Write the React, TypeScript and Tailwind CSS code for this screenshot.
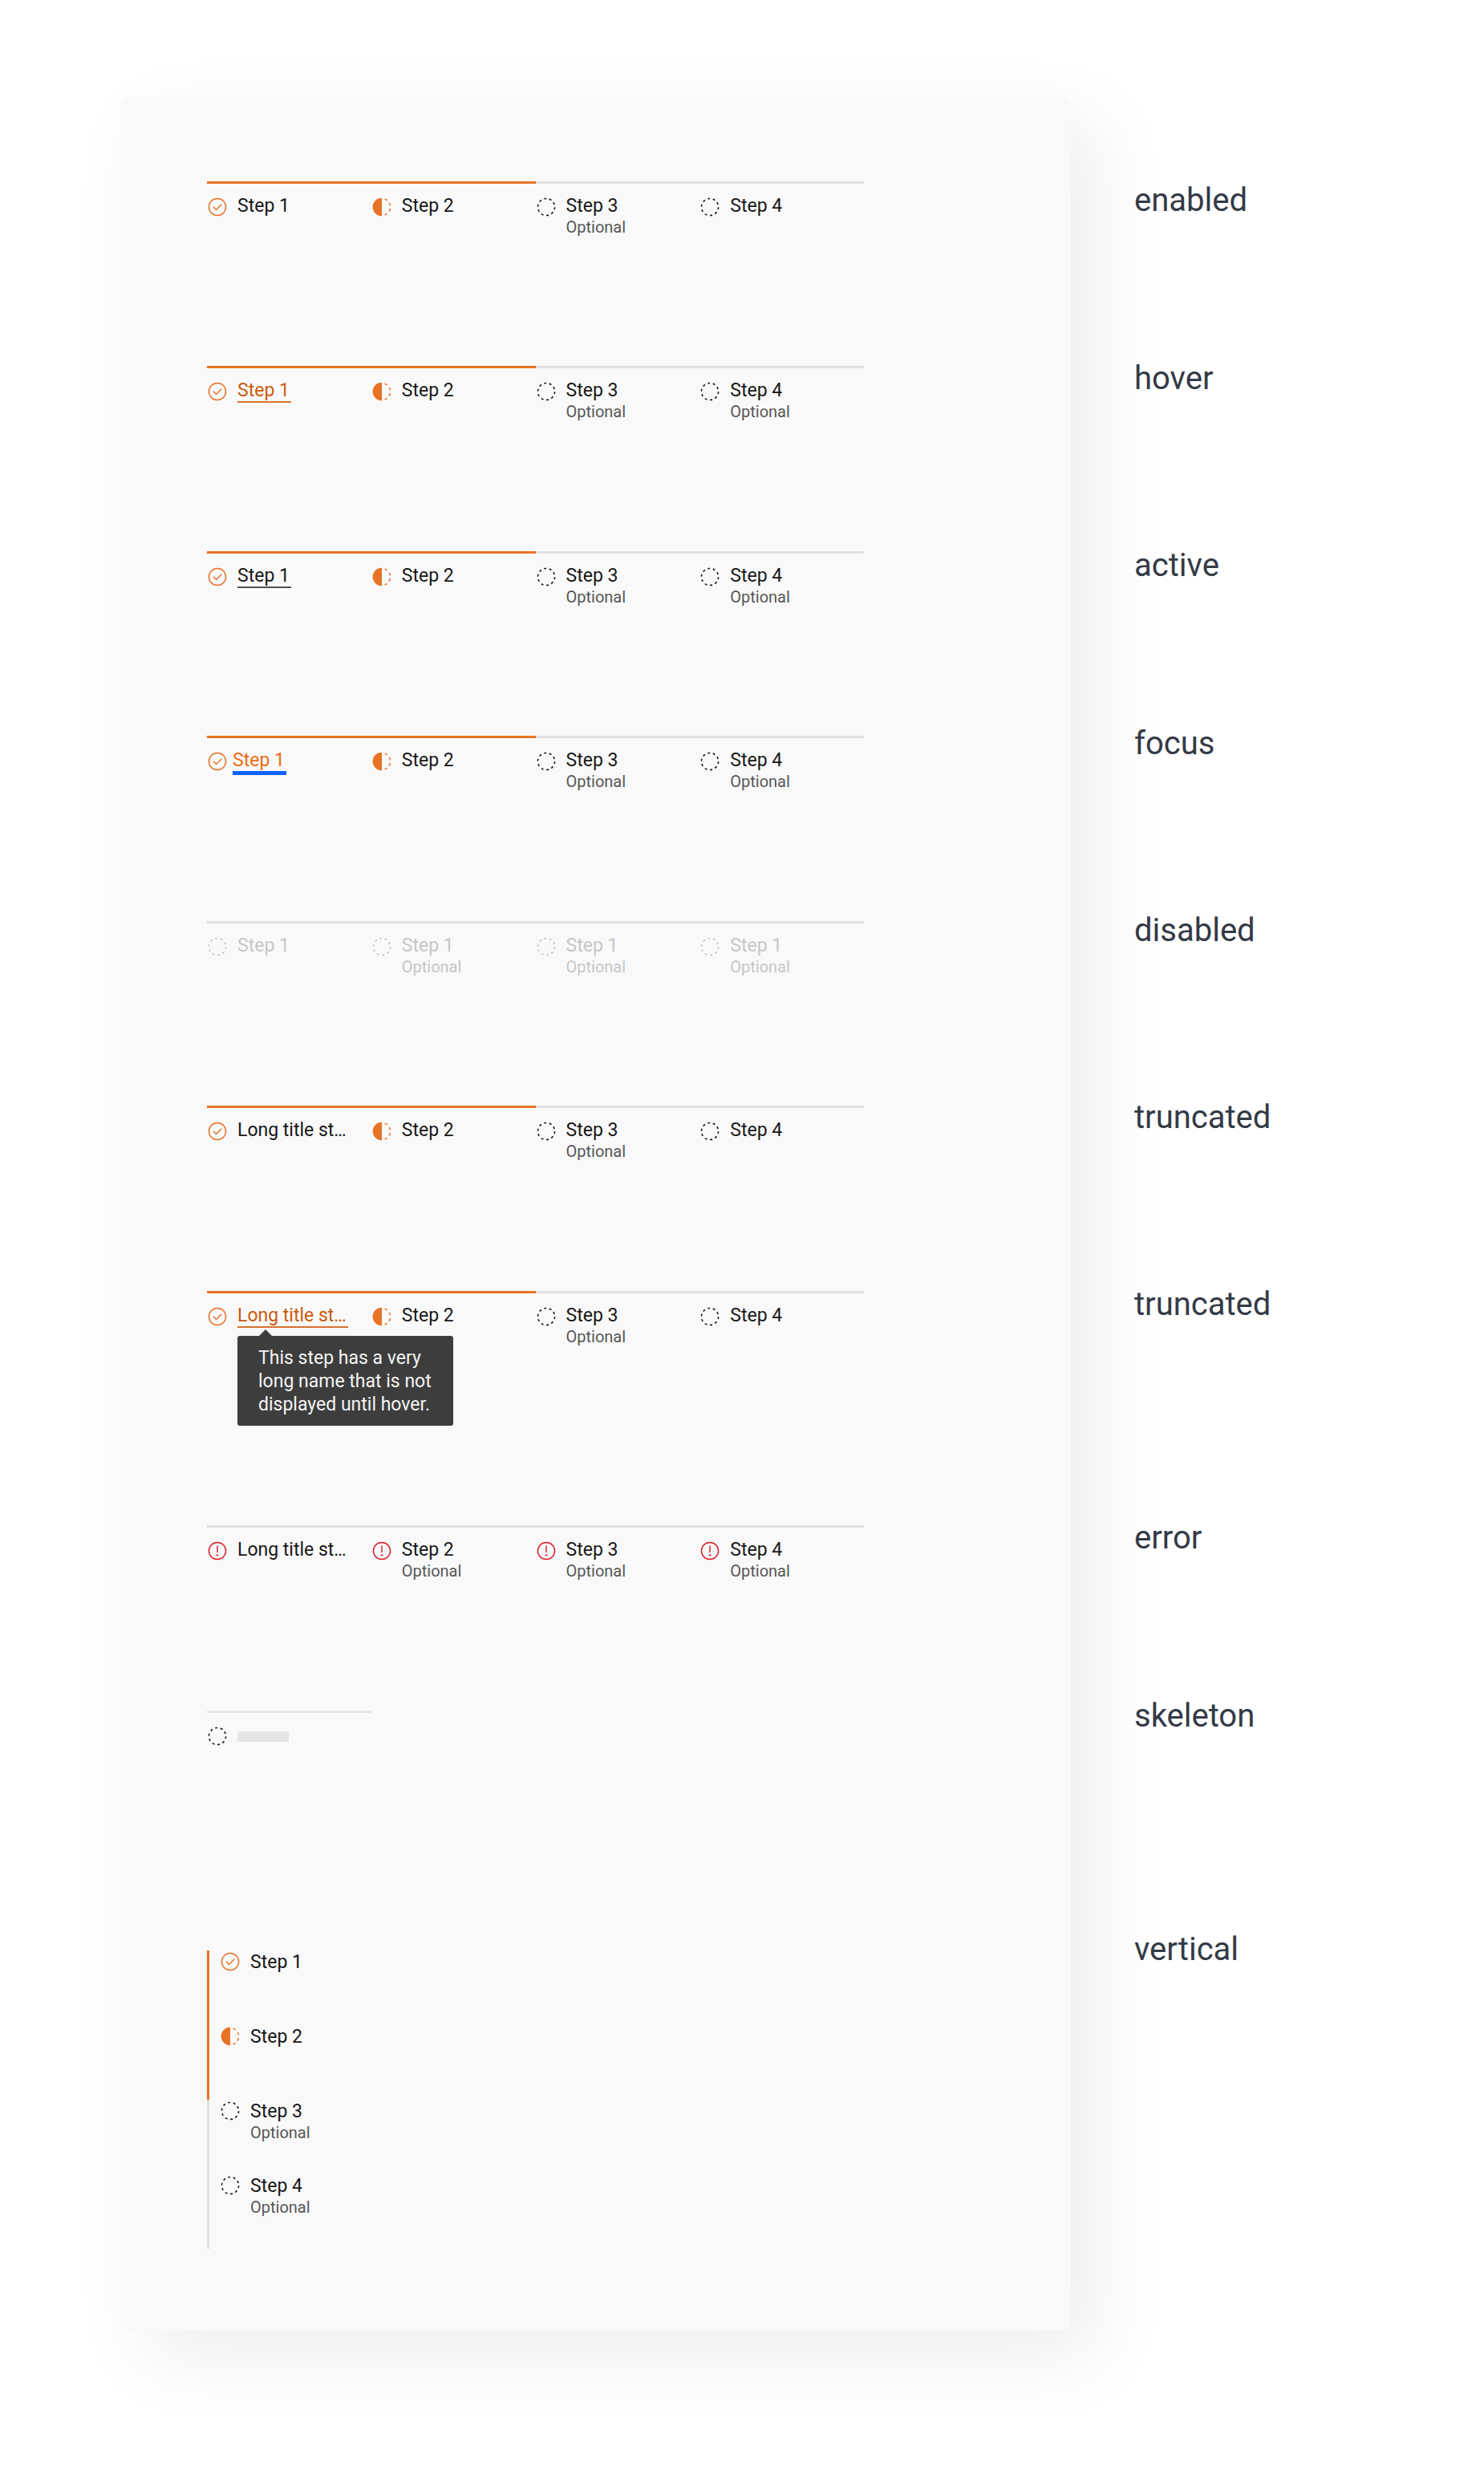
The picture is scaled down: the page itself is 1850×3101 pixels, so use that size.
import React from 'react';

type Status = 'complete' | 'current' | 'incomplete' | 'disabled' | 'error';
type TitleState = 'plain' | 'hover' | 'active' | 'focus';

interface Step {
  title: string;
  status: Status;
  optional?: boolean;
  state?: TitleState;
  tooltip?: string;
}

const LONG_TITLE = 'Long title st…';

const first: Step = { title: 'Step 1', status: 'complete' };
const second: Step = { title: 'Step 2', status: 'current' };
const third: Step = { title: 'Step 3', status: 'incomplete', optional: true };
const fourth: Step = { title: 'Step 4', status: 'incomplete' };
const fourthOptional: Step = { ...fourth, optional: true };
const disabled: Step = { title: 'Step 1', status: 'disabled' };
const disabledOptional: Step = { ...disabled, optional: true };

const rows: Step[][] = [
  [first, second, third, fourth],
  [{ ...first, state: 'hover' }, second, third, fourthOptional],
  [{ ...first, state: 'active' }, second, third, fourthOptional],
  [{ ...first, state: 'focus' }, second, third, fourthOptional],
  [disabled, disabledOptional, disabledOptional, disabledOptional],
  [{ ...first, title: LONG_TITLE }, second, third, fourth],
  [
    {
      ...first,
      title: LONG_TITLE,
      state: 'hover',
      tooltip: 'This step has a very long name that is not displayed until hover.',
    },
    second,
    third,
    fourth,
  ],
];

const errorRow: Step[] = [
  { title: LONG_TITLE, status: 'error' },
  { title: 'Step 2', status: 'error', optional: true },
  { title: 'Step 3', status: 'error', optional: true },
  { title: 'Step 4', status: 'error', optional: true },
];

const verticalSteps: Step[] = [first, second, third, fourthOptional];

const labels = [
  { text: 'enabled', height: 'h-[222px]' },
  { text: 'hover', height: 'h-[233px]' },
  { text: 'active', height: 'h-[222px]' },
  { text: 'focus', height: 'h-[233px]' },
  { text: 'disabled', height: 'h-[233px]' },
  { text: 'truncated', height: 'h-[233px]' },
  { text: 'truncated', height: 'h-[291px]' },
  { text: 'error', height: 'h-[222px]' },
  { text: 'skeleton', height: 'h-[291px]' },
  { text: 'vertical', height: 'h-[60px]' },
];

const StatusIcon: React.FC<{ status: Status; className?: string }> = ({ status, className = '' }) => (
  <svg viewBox="0 0 16 16" className={`h-[26px] w-[26px] shrink-0 ${className}`} aria-hidden="true">
    {status === 'complete' && (
      <g fill="none" stroke="#e87225" strokeWidth="0.9">
        <circle cx="8" cy="8" r="6.5" />
        <path d="M4.9 7.9 7.1 10.1 11.2 6" />
      </g>
    )}
    {status === 'current' && (
      <>
        <path d="M8 1a7 7 0 0 0 0 14z" fill="#e87225" />
        <path
          d="M10.223 1.892A6.5 6.5 0 0 1 10.223 14.108"
          fill="none"
          stroke="#e87225"
          strokeWidth="0.9"
          strokeDasharray="2.269 2.269"
        />
      </>
    )}
    {(status === 'incomplete' || status === 'disabled') && (
      <circle
        cx="8"
        cy="8"
        r="6.5"
        fill="none"
        stroke={status === 'disabled' ? '#c6c6c6' : '#171717'}
        strokeWidth="1"
        strokeDasharray="1.84 2.244"
        strokeDashoffset="-0.1"
      />
    )}
    {status === 'error' && (
      <g stroke="#da1e28" fill="none" strokeWidth="0.9">
        <circle cx="8" cy="8" r="6.5" />
        <path d="M8 4v5.2" />
        <circle cx="8" cy="11.3" r="0.75" fill="#da1e28" stroke="none" />
      </g>
    )}
  </svg>
);

const titleStyles: Record<TitleState, string> = {
  plain: 'border-b-2 border-transparent text-[#171717]',
  hover: 'border-b-2 border-[#d9712f] text-[#cb5a0a]',
  active: 'border-b-2 border-[#4d5358] text-[#171717]',
  focus: 'border-b-[5px] border-[#0f62fe] text-[#ee6a10]',
};

const StepText: React.FC<{ step: Step }> = ({ step }) => {
  const muted = step.status === 'disabled';
  return (
    <div className="relative">
      <button
        type="button"
        disabled={muted}
        className={`block pr-0.5 text-left text-[23px] leading-[27px] whitespace-nowrap ${
          muted ? 'border-b-2 border-transparent text-[#c6c6c6]' : titleStyles[step.state ?? 'plain']
        }`}
      >
        {step.title}
      </button>
      {step.optional && (
        <p className={`text-[20px] leading-[22px] ${muted ? 'text-[#c6c6c6]' : 'text-[#565656]'}`}>Optional</p>
      )}
      {step.tooltip && (
        <div
          role="tooltip"
          className="absolute top-[39px] left-0 z-10 w-[269px] rounded-[3px] bg-[#3d3d3d] px-[26px] pt-[13px] pb-3 text-[23px] leading-[29px] text-[#f4f4f4]"
        >
          <span className="absolute -top-2 left-[27px] border-x-8 border-b-8 border-x-transparent border-b-[#3d3d3d]" />
          {step.tooltip}
        </div>
      )}
    </div>
  );
};

const isDone = (step: Step) => step.status === 'complete' || step.status === 'current';

const HorizontalSteps: React.FC<{ steps: Step[] }> = ({ steps }) => (
  <ol className="grid w-[819px] max-w-full grid-cols-4">
    {steps.map((step, i) => (
      <li
        key={i}
        className={`flex items-start border-t-[3px] pt-3.5 ${isDone(step) ? 'border-[#e87225]' : 'border-[#e0e0e0]'} ${
          step.state === 'focus' ? 'gap-1.5' : 'gap-3'
        }`}
      >
        <StatusIcon status={step.status} className="mt-0.5" />
        <StepText step={step} />
      </li>
    ))}
  </ol>
);

const VerticalSteps: React.FC<{ steps: Step[] }> = ({ steps }) => (
  <ol className="flex flex-col">
    {steps.map((step, i) => (
      <li
        key={i}
        className={`flex h-[93px] items-start gap-3 border-l-[3px] pt-px pl-[13px] ${
          isDone(step) ? 'border-[#e87225]' : 'border-[#e0e0e0]'
        }`}
      >
        <StatusIcon status={step.status} />
        <StepText step={step} />
      </li>
    ))}
  </ol>
);

const App: React.FC = () => (
  <div className="flex min-h-screen items-start bg-white pt-[120px] pb-[198px] pl-[150px] font-['Roboto',sans-serif]">
    <main className="w-[1185px] rounded-xl bg-[#f9f9f9] px-[108px] pt-[106px] pb-[102px] shadow-[32px_32px_96px_rgba(0,0,0,0.07)]">
      <div className="grid min-h-[1613px] auto-rows-fr">
        {rows.map((steps, i) => (
          <HorizontalSteps key={i} steps={steps} />
        ))}
      </div>
      <div className="mt-[62px] h-[231px]">
        <HorizontalSteps steps={errorRow} />
      </div>
      <div className="h-[299px]">
        <div className="flex w-[205px] items-center gap-3 border-t-[3px] border-[#e5e5e5] pt-4">
          <StatusIcon status="incomplete" />
          <div className="h-[13px] w-16 bg-[#e5e5e5]" />
        </div>
      </div>
      <VerticalSteps steps={verticalSteps} />
    </main>
    <aside className="relative flex flex-col pt-[100px] pl-[79px] text-[40px] leading-[60px] text-[#343a46]">
      {labels.map((label, i) => (
        <p key={i} className={label.height}>
          {label.text}
        </p>
      ))}
    </aside>
  </div>
);

export default App;
